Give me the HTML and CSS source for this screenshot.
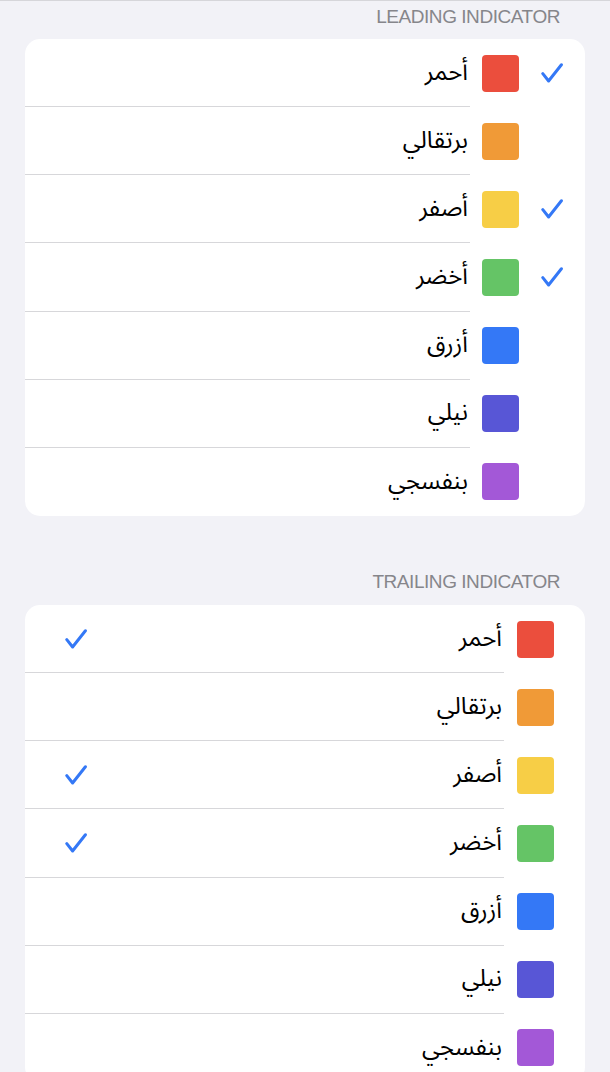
FILE: index.html
```html
<!DOCTYPE html>
<html lang="ar" dir="rtl">
<head>
<meta charset="utf-8">
<title>Indicators</title>
<link rel="stylesheet" href="styles.css">
</head>
<body>
<div class="topline"></div>

<section class="section first">
  <h2 class="header" dir="ltr">LEADING INDICATOR</h2>
  <div class="card leading">
    <div class="row">
      <div class="lead"><span class="check"><svg viewBox="0 0 22 20" width="22" height="20"><path d="M1.8 10.6 L7.6 18 L20.4 1.8"/></svg></span><span class="swatch red"></span></div>
      <div class="content"><span class="label">أحمر</span></div>
    </div>
    <div class="row">
      <div class="lead"><span class="check"></span><span class="swatch orange"></span></div>
      <div class="content"><span class="label">برتقالي</span></div>
    </div>
    <div class="row">
      <div class="lead"><span class="check"><svg viewBox="0 0 22 20" width="22" height="20"><path d="M1.8 10.6 L7.6 18 L20.4 1.8"/></svg></span><span class="swatch yellow"></span></div>
      <div class="content"><span class="label">أصفر</span></div>
    </div>
    <div class="row">
      <div class="lead"><span class="check"><svg viewBox="0 0 22 20" width="22" height="20"><path d="M1.8 10.6 L7.6 18 L20.4 1.8"/></svg></span><span class="swatch green"></span></div>
      <div class="content"><span class="label">أخضر</span></div>
    </div>
    <div class="row">
      <div class="lead"><span class="check"></span><span class="swatch blue"></span></div>
      <div class="content"><span class="label">أزرق</span></div>
    </div>
    <div class="row">
      <div class="lead"><span class="check"></span><span class="swatch indigo"></span></div>
      <div class="content"><span class="label">نيلي</span></div>
    </div>
    <div class="row">
      <div class="lead"><span class="check"></span><span class="swatch purple"></span></div>
      <div class="content"><span class="label">بنفسجي</span></div>
    </div>
  </div>
</section>

<section class="section second">
  <h2 class="header" dir="ltr">TRAILING INDICATOR</h2>
  <div class="card trailing">
    <div class="row">
      <div class="lead"><span class="swatch red"></span></div>
      <div class="content"><span class="label">أحمر</span><span class="check"><svg viewBox="0 0 22 20" width="22" height="20"><path d="M1.8 10.6 L7.6 18 L20.4 1.8"/></svg></span></div>
    </div>
    <div class="row">
      <div class="lead"><span class="swatch orange"></span></div>
      <div class="content"><span class="label">برتقالي</span><span class="check"></span></div>
    </div>
    <div class="row">
      <div class="lead"><span class="swatch yellow"></span></div>
      <div class="content"><span class="label">أصفر</span><span class="check"><svg viewBox="0 0 22 20" width="22" height="20"><path d="M1.8 10.6 L7.6 18 L20.4 1.8"/></svg></span></div>
    </div>
    <div class="row">
      <div class="lead"><span class="swatch green"></span></div>
      <div class="content"><span class="label">أخضر</span><span class="check"><svg viewBox="0 0 22 20" width="22" height="20"><path d="M1.8 10.6 L7.6 18 L20.4 1.8"/></svg></span></div>
    </div>
    <div class="row">
      <div class="lead"><span class="swatch blue"></span></div>
      <div class="content"><span class="label">أزرق</span><span class="check"></span></div>
    </div>
    <div class="row">
      <div class="lead"><span class="swatch indigo"></span></div>
      <div class="content"><span class="label">نيلي</span><span class="check"></span></div>
    </div>
    <div class="row">
      <div class="lead"><span class="swatch purple"></span></div>
      <div class="content"><span class="label">بنفسجي</span><span class="check"></span></div>
    </div>
  </div>
</section>
</body>
</html>
```

FILE: styles.css
```css
html, body {
  margin: 0;
  padding: 0;
}

body {
  background: #f2f2f7;
  font-family: "Noto Sans Arabic", "Noto Naskh Arabic", "DejaVu Sans", sans-serif;
  padding-bottom: 40px;
}

.topline {
  height: 1px;
  background: #d6d6da;
}

.header {
  margin: 0;
  font-family: "Liberation Sans", Arial, sans-serif;
  font-weight: normal;
  font-size: 19px;
  line-height: 22px;
  letter-spacing: -0.45px;
  color: #86868b;
  text-align: right;
  padding-right: 50px;
}

.first .header {
  padding-top: 5px;
  margin-bottom: 11px;
}

.second .header {
  margin-top: 55px;
  margin-bottom: 12px;
}

.card {
  margin: 0 25px;
  background: #ffffff;
  border-radius: 15px;
  overflow: hidden;
}

.row {
  display: flex;
  height: 68.15px;
  align-items: stretch;
}

.lead {
  display: flex;
  align-items: center;
  flex: none;
}

.leading .lead {
  padding-right: 22px;
  padding-left: 12px;
  gap: 22px;
}

.trailing .lead {
  padding-right: 31px;
  padding-left: 13px;
}

.content {
  flex: 1;
  display: flex;
  align-items: center;
  justify-content: space-between;
  border-bottom: 1px solid #d7d7da;
  box-sizing: border-box;
}

.row:last-child .content {
  border-bottom: none;
}

.trailing .content {
  padding-left: 40px;
}

.label {
  font-size: 24px;
  color: #000;
  line-height: 1;
  margin-right: 2px;
}

.check {
  display: block;
  width: 22px;
  height: 20px;
  flex: none;
}

.check svg {
  display: block;
}

.check path {
  fill: none;
  stroke: #3478f6;
  stroke-width: 3;
  stroke-linecap: round;
  stroke-linejoin: round;
}

.swatch {
  display: block;
  width: 37px;
  height: 37px;
  border-radius: 4px;
  flex: none;
}

.red { background: #eb4e3d; }
.orange { background: #f09a37; }
.yellow { background: #f7ce46; }
.green { background: #65c466; }
.blue { background: #3478f6; }
.indigo { background: #5856d6; }
.purple { background: #a358d7; }
```
